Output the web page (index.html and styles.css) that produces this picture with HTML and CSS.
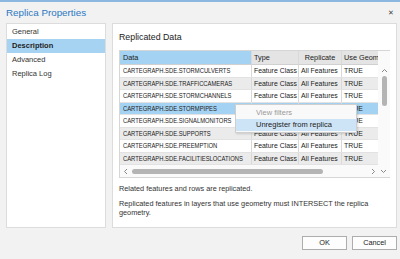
FILE: index.html
```html
<!DOCTYPE html>
<html lang="en">
<head>
  <meta charset="UTF-8" />
  <title>Replica Properties</title>
  <link rel="stylesheet" href="styles.css">
</head>
<body>
  <div class="dialog">
    <div class="title-bar">
      <span class="title">Replica Properties</span>
      <span class="close">&#x2715;</span>
    </div>
    <div class="main">
      <div class="nav">
        <div class="nav-item">General</div>
        <div class="nav-item active">Description</div>
        <div class="nav-item">Advanced</div>
        <div class="nav-item">Replica Log</div>
      </div>
      <div class="panel">
        <h2>Replicated Data</h2>
        <div class="grid">
          <div class="grid-head">
            <div class="cell c-data sorted">Data</div>
            <div class="cell c-type">Type</div>
            <div class="cell c-rep center">Replicate</div>
            <div class="cell c-geom">Use Geom</div>
          </div>
          <div class="grid-corner"></div>
          <div class="grid-rows">
            <div class="row">
              <div class="cell c-data"><span>CARTEGRAPH.SDE.STORMCULVERTS</span></div>
              <div class="cell c-type">Feature Class</div>
              <div class="cell c-rep">All Features</div>
              <div class="cell c-geom">TRUE</div>
            </div>
            <div class="row alt">
              <div class="cell c-data"><span>CARTEGRAPH.SDE.TRAFFICCAMERAS</span></div>
              <div class="cell c-type">Feature Class</div>
              <div class="cell c-rep">All Features</div>
              <div class="cell c-geom">TRUE</div>
            </div>
            <div class="row">
              <div class="cell c-data"><span>CARTEGRAPH.SDE.STORMCHANNELS</span></div>
              <div class="cell c-type">Feature Class</div>
              <div class="cell c-rep">All Features</div>
              <div class="cell c-geom">TRUE</div>
            </div>
            <div class="row selected">
              <div class="cell c-data"><span>CARTEGRAPH.SDE.STORMPIPES</span></div>
              <div class="cell c-type">Feature Class</div>
              <div class="cell c-rep">All Features</div>
              <div class="cell c-geom">TRUE</div>
            </div>
            <div class="row">
              <div class="cell c-data"><span>CARTEGRAPH.SDE.SIGNALMONITORS</span></div>
              <div class="cell c-type">Feature Class</div>
              <div class="cell c-rep">All Features</div>
              <div class="cell c-geom">TRUE</div>
            </div>
            <div class="row alt">
              <div class="cell c-data"><span>CARTEGRAPH.SDE.SUPPORTS</span></div>
              <div class="cell c-type">Feature Class</div>
              <div class="cell c-rep">All Features</div>
              <div class="cell c-geom">TRUE</div>
            </div>
            <div class="row">
              <div class="cell c-data"><span>CARTEGRAPH.SDE.PREEMPTION</span></div>
              <div class="cell c-type">Feature Class</div>
              <div class="cell c-rep">All Features</div>
              <div class="cell c-geom">TRUE</div>
            </div>
            <div class="row alt">
              <div class="cell c-data"><span>CARTEGRAPH.SDE.FACILITIESLOCATIONS</span></div>
              <div class="cell c-type">Feature Class</div>
              <div class="cell c-rep">All Features</div>
              <div class="cell c-geom">TRUE</div>
            </div>
          </div>
          <div class="vscroll">
            <svg class="chev" width="7" height="5" viewBox="0 0 7 5"><path d="M1 4 L3.5 1.5 L6 4" fill="none" stroke="#888" stroke-width="1"/></svg>
            <div class="vthumb"></div>
          </div>
          <div class="hscroll">
            <svg class="chev" width="5" height="7" viewBox="0 0 5 7"><path d="M4 1 L1.5 3.5 L4 6" fill="none" stroke="#888" stroke-width="1"/></svg>
            <div class="hthumb"></div>
            <svg class="chev right" width="5" height="7" viewBox="0 0 5 7"><path d="M1 1 L3.5 3.5 L1 6" fill="none" stroke="#888" stroke-width="1"/></svg>
            <svg class="chev down" width="7" height="5" viewBox="0 0 7 5"><path d="M1 1 L3.5 3.5 L6 1" fill="none" stroke="#888" stroke-width="1"/></svg>
          </div>
          <div class="context-menu">
            <div class="menu-item disabled">View filters</div>
            <div class="menu-item hover">Unregister from replica</div>
          </div>
        </div>
        <p class="note">Related features and rows are replicated.</p>
        <p class="note wrap">Replicated features in layers that use geometry must INTERSECT the replica<br>geometry.</p>
      </div>
    </div>
    <div class="footer">
      <button class="btn">OK</button>
      <button class="btn">Cancel</button>
    </div>
  </div>
</body>
</html>
```

FILE: styles.css
```css
* { box-sizing: border-box; }
html, body {
  margin: 0;
  width: 400px;
  height: 259px;
  overflow: hidden;
}
body {
  font-family: "Liberation Sans", Arial, sans-serif;
  background-color: #f2f2f2;
  color: #222;
  border-top: 2px solid #8cb8df;
}
.dialog {
  padding: 0 3px 0 6px;
}
.title-bar {
  display: flex;
  justify-content: space-between;
  align-items: center;
  height: 21px;
}
.title {
  font-size: 9.8px;
  color: #2a78c2;
}
.close {
  font-size: 7px;
  color: #444;
  margin-right: 3px;
}
.main {
  display: flex;
  gap: 6px;
  height: 205px;
}
.nav {
  width: 101px;
  background: #fff;
  border: 1px solid #dcdcdc;
  padding-top: 1px;
}
.nav-item {
  font-size: 7.5px;
  height: 14px;
  line-height: 14px;
  padding-left: 5px;
  color: #333;
}
.nav-item.active {
  background: #a7d3f3;
  font-weight: bold;
  color: #222;
}
.panel {
  flex: 1;
  background: #fff;
  border: 1px solid #dcdcdc;
  padding: 7px 6px 0 6px;
}
h2 {
  font-size: 8.8px;
  font-weight: normal;
  margin: 0 0 6px 0;
  height: 13px;
  line-height: 13px;
  color: #222;
}
.grid {
  position: relative;
  width: 271px;
  display: grid;
  grid-template-columns: 258px 12px;
  grid-template-rows: 14px 100px 12px;
  border: 1px solid #d6d6d6;
  background: #f4f4f4;
  font-size: 6.9px;
}
.grid-head, .row {
  display: flex;
  overflow: hidden;
  white-space: nowrap;
}
.grid-head { background: #e4e4e4; }
.grid-corner { background: #fafafa; }
.cell {
  flex: none;
  overflow: hidden;
  padding-left: 2px;
  border-right: 1px solid #d9d9d9;
}
.c-data { padding-left: 3px; }
.c-data span {
  display: inline-block;
  font-size: 8px;
  transform: scaleX(0.73);
  transform-origin: left center;
}
.grid-head .cell {
  line-height: 13px;
  font-size: 7.3px;
  border-bottom: 1px solid #d0d0d0;
  color: #222;
}
.grid-head .cell.sorted { background: #a3d2f3; }
.grid-head .center { text-align: center; padding-left: 0; }
.c-data { width: 132px; }
.c-type { width: 47px; }
.c-rep { width: 43px; }
.c-geom { width: 36px; border-right: none; }
.grid-rows { overflow: hidden; background: #fff; }
.row {
  height: 12.5px;
  line-height: 12px;
  border-bottom: 1px solid #e2e2e2;
  background: #fff;
}
.row.alt { background: #ebebeb; }
.row.selected { background: #a3d2f3; }
.vscroll {
  background: #fafafa;
  display: flex;
  flex-direction: column;
  align-items: center;
  padding-top: 3px;
  gap: 3px;
}
.vthumb {
  width: 5px;
  height: 30px;
  background: #b4b4b4;
  border-radius: 3px;
}
.hscroll {
  grid-column: 1 / 3;
  display: flex;
  align-items: center;
  padding-left: 3px;
  background: #fafafa;
}
.hthumb {
  width: 191px;
  height: 5px;
  margin-left: 4px;
  background: #b4b4b4;
  border-radius: 3px;
}
.hscroll .right { margin-left: 48px; }
.hscroll .down { margin-left: 4px; }
.context-menu {
  position: absolute;
  left: 115px;
  top: 53px;
  width: 122px;
  background: #f9f9f9;
  border: 1px solid #cfcfcf;
  box-shadow: 1px 1px 2px rgba(0, 0, 0, 0.15);
  padding: 2px 0 1px 0;
  font-size: 7.5px;
}
.menu-item {
  height: 12px;
  line-height: 12px;
  padding-left: 20px;
}
.menu-item.disabled { color: #9a9a9a; }
.menu-item.hover { background: #cde4f6; color: #222; }
.note {
  font-size: 7.3px;
  margin: 6px 0 0 0;
  line-height: 9px;
  color: #333;
}
.note.wrap { margin-top: 6px; }
.footer {
  display: flex;
  justify-content: flex-end;
  gap: 5px;
  padding-top: 8px;
}
.btn {
  width: 45px;
  height: 14px;
  font-family: inherit;
  font-size: 7.3px;
  line-height: 10px;
  padding: 0;
  background: #fdfdfd;
  border: 1px solid #adadad;
  color: #222;
}
```
